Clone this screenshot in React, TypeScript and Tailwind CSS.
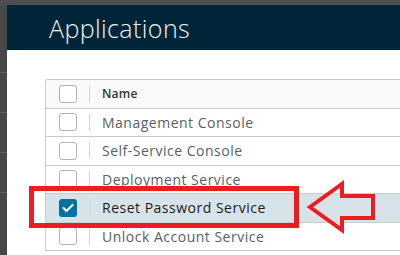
import React from 'react';

const apps = [
  { name: 'Management Console', checked: false },
  { name: 'Self-Service Console', checked: false },
  { name: 'Deployment Service', checked: false },
  { name: 'Reset Password Service', checked: true },
  { name: 'Unlock Account Service', checked: false },
];

const Checkbox: React.FC<{ checked?: boolean }> = ({ checked }) =>
  checked ? (
    <div className="w-[18px] h-[18px] rounded-[3px] bg-[#0072a3] flex items-center justify-center">
      <svg width="12" height="10" viewBox="0 0 12 10">
        <path d="M1.5 5 L4.5 8 L10.5 2" fill="none" stroke="white" strokeWidth="2.2" strokeLinecap="round" strokeLinejoin="round" />
      </svg>
    </div>
  ) : (
    <div className="w-[18px] h-[18px] rounded-[3px] border border-[#b3b3b3] bg-white" />
  );

const Row: React.FC<{ name: string; checked?: boolean; header?: boolean }> = ({ name, checked, header }) => (
  <div
    className={`h-[28.5px] flex items-center border-b border-[#cccccc] ${
      header ? 'bg-[#fafafa]' : checked ? 'bg-[#d8e3e9]' : 'bg-white'
    }`}
  >
    <div className="w-[43px] pl-[13px] flex items-center">
      <Checkbox checked={checked} />
    </div>
    <div className="w-px h-[17px] bg-[#d6d6d6]" />
    <div
      className={`pl-[12px] whitespace-nowrap ${
        header
          ? 'text-[12px] font-semibold text-[#333333] tracking-[0.2px]'
          : checked
          ? 'text-[14px] text-[#1b1b1b] tracking-[0.5px]'
          : 'text-[14px] text-[#565f68] tracking-[0.5px]'
      }`}
    >
      {name}
    </div>
  </div>
);

const App: React.FC = () => {
  return (
    <div className="relative w-[400px] h-[255px] overflow-hidden bg-[#4a4a4a]" style={{ fontFamily: '"Open Sans", "Liberation Sans", sans-serif' }}>
      <div className="h-[5px] bg-[#4e4e4e]" />
      <div className="flex h-[250px]">
        {/* dimmed page behind the modal */}
        <div className="w-[7px] flex flex-col bg-[#474747]">
          <div className="h-[68px] border-b border-[#5a5a5a]" />
          <div className="h-[40px] border-b border-[#5a5a5a]" />
          <div className="h-[40px] border-b border-[#5a5a5a]" />
          <div className="h-[40px] border-b border-[#5a5a5a]" />
        </div>

        {/* modal */}
        <div className="flex-1 flex flex-col bg-white">
          <div className="h-[45px] bg-[#002538] flex items-center pl-[42px]">
            <h1 className="text-[25px] font-light text-[#f2f2f2] tracking-[0.4px] leading-none pt-[2px]">Applications</h1>
          </div>
          <div className="pt-[29px] pl-[38px]">
            <div className="border-l border-t border-[#cccccc] rounded-tl-[3px] overflow-hidden">
              <Row name="Name" header />
              {apps.map((a) => (
                <Row key={a.name} name={a.name} checked={a.checked} />
              ))}
            </div>
          </div>
        </div>
      </div>

      {/* annotation: highlight box */}
      <div className="absolute left-[29px] top-[186px] w-[270px] h-[42px] border-[5px] border-[#ed1c24]" />

      {/* annotation: arrow */}
      <svg className="absolute left-0 top-0" width="400" height="255" viewBox="0 0 400 255">
        <polygon
          points="310,207 342,184 342,196 373,196 373,218 342,218 342,230"
          fill="none"
          stroke="#ed1c24"
          strokeWidth="4"
          strokeLinejoin="miter"
        />
      </svg>
    </div>
  );
};

export default App;
